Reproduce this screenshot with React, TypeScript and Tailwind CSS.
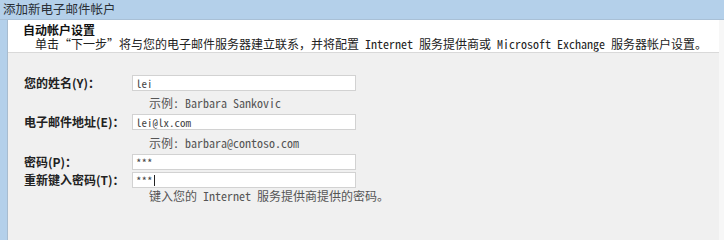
const mono = "font-['Noto_Sans_Mono_CJK_SC','Noto_Sans_CJK_SC',monospace]";

function Field({ label, value, caret = false }: { label: string; value: string; caret?: boolean }) {
  return (
    <div className="flex h-[16px] items-center">
      <div className="w-[108px] font-['Noto_Sans_CJK_SC',sans-serif] text-[12px] font-bold leading-none text-[#222]">
        {label}
      </div>
      <div className={`flex h-[16px] w-[224px] items-center border border-[#d2d2d2] bg-white px-[3px] text-[11px] leading-none text-[#444] ${mono}`}>
        {value}
        {caret && <span className="ml-[1px] h-[11px] w-px bg-[#222]" />}
      </div>
    </div>
  );
}

function Hint({ text }: { text: string }) {
  return (
    <div className={`h-[12px] pl-[125px] text-[12px] leading-[12px] text-[#555] ${mono}`}>{text}</div>
  );
}

export default function App() {
  return (
    <div className="flex h-[240px] w-[724px] flex-col bg-[#b4d0ea]">
      <div className="h-[19px] pl-[3px] pt-[2px] font-['Noto_Sans_CJK_SC',sans-serif] text-[12.5px] leading-[14px] text-[#2a2f36]">
        添加新电子邮件帐户
      </div>
      <div className="flex flex-1 border-t border-[#a9c0d6]">
        <div className="w-[8px] border-r border-[#a8bccf]" />
        <div className="flex flex-1 flex-col bg-[#f0f0f0]">
          <div className="h-[33px] border-b border-[#d9d9d9] bg-white pl-[15px] pt-[2px]">
            <div className="h-[15px] font-['Noto_Sans_CJK_SC',sans-serif] text-[12px] font-bold leading-[15px] text-[#111]">
              自动帐户设置
            </div>
            <div className={`h-[13px] pl-[12px] text-[12px] leading-[13px] text-[#222] ${mono}`}>
              单击“下一步”将与您的电子邮件服务器建立联系，并将配置 Internet 服务提供商或 Microsoft Exchange 服务器帐户设置。
            </div>
          </div>
          <div className="flex flex-col pl-[16px] pt-[22px]">
            <Field label="您的姓名(Y)：" value="lei" />
            <div className="h-[6px]" />
            <Hint text="示例: Barbara Sankovic" />
            <div className="h-[5px]" />
            <Field label="电子邮件地址(E)：" value="lei@lx.com" />
            <div className="h-[7px]" />
            <Hint text="示例: barbara@contoso.com" />
            <div className="h-[5px]" />
            <Field label="密码(P)：" value="***" />
            <div className="h-[2px]" />
            <Field label="重新键入密码(T)：" value="***" caret />
            <div className="h-[2px]" />
            <Hint text="键入您的 Internet 服务提供商提供的密码。" />
          </div>
        </div>
        <div className="w-[5px] bg-[#f7f7f7]" />
      </div>
    </div>
  );
}
